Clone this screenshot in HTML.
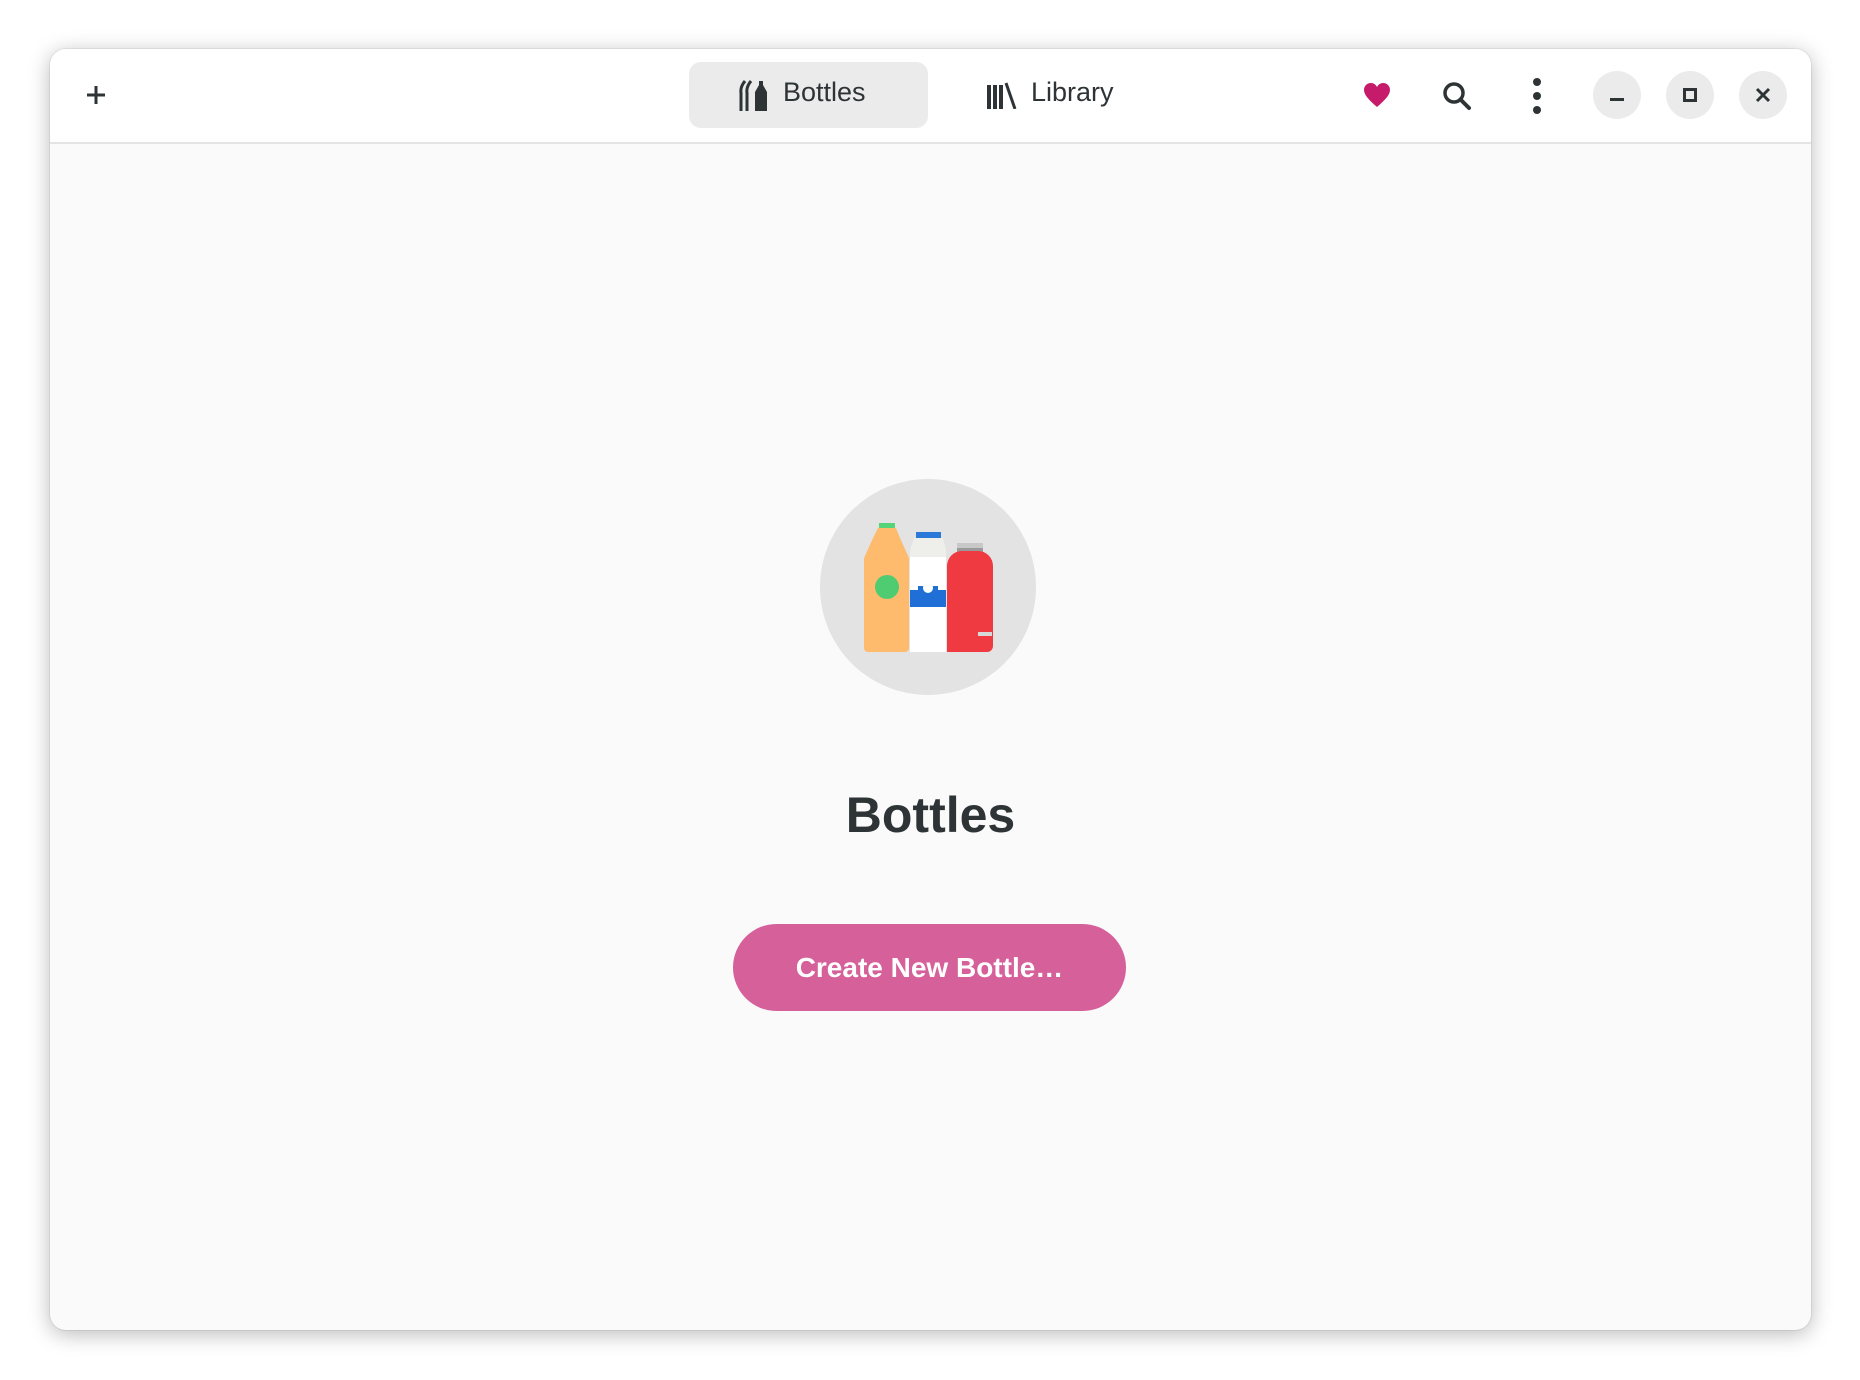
<!DOCTYPE html>
<html><head><meta charset="utf-8"><style>
html,body{margin:0;padding:0;width:1860px;height:1380px;background:#fff;overflow:hidden;font-family:"Liberation Sans","DejaVu Sans",sans-serif;}
.win{position:absolute;left:50px;top:49px;width:1761px;height:1281px;border-radius:16px;background:#fafafa;box-shadow:0 4px 22px rgba(0,0,0,.28),0 0 0 1px rgba(0,0,0,.06);overflow:hidden;}
.hdr{position:absolute;left:0;top:0;right:0;height:93px;background:#fff;border-bottom:2px solid #e4e4e4;}
.tab{position:absolute;top:13px;height:66px;border-radius:12px;display:flex;align-items:center;font-size:27px;color:#2e3436;}
.tab span{position:relative;top:-3px}
.circ{position:absolute;top:22px;width:48px;height:48px;border-radius:50%;background:#ebebeb;}
.abs{position:absolute;}
</style></head><body>
<div class="win">
 <div class="hdr">
  <svg class="abs" style="left:34px;top:34px" width="24" height="24" viewBox="0 0 24 24"><path d="M12 3v18M3 12h18" stroke="#2e3436" stroke-width="3"/></svg>
  <div class="tab" style="left:639px;width:239px;background:#ebebeb;">
   <svg style="margin-left:50px" width="30" height="32" viewBox="0 0 30 32"><path d="M6 2Q1 8 2 14V32M12 2Q7 8 8 14V32" stroke="#2e3436" stroke-width="3" fill="none"/><path d="M20 2h4v4l4 7v19H16V13l4-7z" fill="#2e3436"/></svg>
   <span style="margin-left:14px">Bottles</span>
  </div>
  <div class="tab" style="left:935px;">
   <svg style="margin-left:2px" width="30" height="28" viewBox="0 0 30 28"><path d="M2 4v24M8 4v24M14 4v24" stroke="#2e3436" stroke-width="4"/><path d="M19 2l9 26" stroke="#2e3436" stroke-width="3"/></svg>
   <span style="margin-left:14px">Library</span>
  </div>
  <svg class="abs" style="left:1313px;top:33px" width="28" height="26" viewBox="0 0 28 26"><path d="M14 25C6 18 1 13 1 8 1 4 4 1 8 1c3 0 5 2 6 4 1-2 3-4 6-4 4 0 7 3 7 7 0 5-5 10-13 17z" fill="#c61a6b"/></svg>
  <svg class="abs" style="left:1392px;top:32px" width="30" height="30" viewBox="0 0 30 30"><circle cx="12" cy="12" r="9" stroke="#2e3436" stroke-width="3.5" fill="none"/><path d="M18.5 18.5L27 27" stroke="#2e3436" stroke-width="4" stroke-linecap="round"/></svg>
  <svg class="abs" style="left:1480px;top:27px" width="14" height="40" viewBox="0 0 14 40"><circle cx="7" cy="6" r="4" fill="#2e3436"/><circle cx="7" cy="20" r="4" fill="#2e3436"/><circle cx="7" cy="34" r="4" fill="#2e3436"/></svg>
  <div class="circ" style="left:1543px"><div class="abs" style="left:17px;top:27px;width:14px;height:3px;background:#2e3436"></div></div>
  <div class="circ" style="left:1616px"><div class="abs" style="left:17px;top:17px;width:8px;height:8px;border:3px solid #2e3436"></div></div>
  <div class="circ" style="left:1689px"><svg class="abs" style="left:16px;top:16px" width="16" height="16" viewBox="0 0 16 16"><path d="M2 2l12 12M14 2L2 14" stroke="#2e3436" stroke-width="3"/></svg></div>
 </div>
 <svg class="abs" style="left:770px;top:430px" width="216" height="216" viewBox="820 479 216 216">
  <circle cx="928" cy="587" r="108" fill="#e3e3e3"/>
  <rect x="879" y="523" width="16" height="5" fill="#57d37a"/>
  <path d="M878 528h18l4 10 9 20v90a4 4 0 0 1-4 4h-37a4 4 0 0 1-4-4v-90l9-20z" fill="#ffbb6d"/>
  <circle cx="887" cy="587" r="12" fill="#4fcc72"/>
  <rect x="916" y="532" width="25" height="6" fill="#2a78d8"/>
  <path d="M914 538h29l3 12v7h-36v-7z" fill="#eeeeea"/>
  <rect x="910" y="557" width="36" height="95" fill="#fff"/>
  <rect x="910" y="590" width="36" height="17" fill="#1f6fd6"/>
  <path d="M918 590h20v-4h-20z" fill="#1f6fd6"/>
  <path d="M928 576q-5 7-5 12a5 5 0 0 0 10 0q0-5-5-12z" fill="#fff"/>
  <rect x="957" y="543" width="26" height="8" fill="#c8c8c8"/>
  <rect x="957" y="548" width="26" height="4" fill="#9a9a9a"/>
  <path d="M962 551h16a15 15 0 0 1 15 15v80a6 6 0 0 1-6 6h-40v-86a15 15 0 0 1 15-15z" fill="#ee3a40"/>
  <rect x="978" y="632" width="14" height="4" fill="#d8d8d8"/>
 </svg>
 <div class="abs" style="left:0;right:0;top:737px;text-align:center;font-size:50px;font-weight:bold;color:#2e3436;">Bottles</div>
 <div class="abs" style="left:683px;top:875px;width:393px;height:87px;border-radius:44px;background:#d6609a;color:#fff;font-size:28px;font-weight:bold;text-align:center;line-height:87px;">Create New Bottle…</div>
</div>
</body></html>
